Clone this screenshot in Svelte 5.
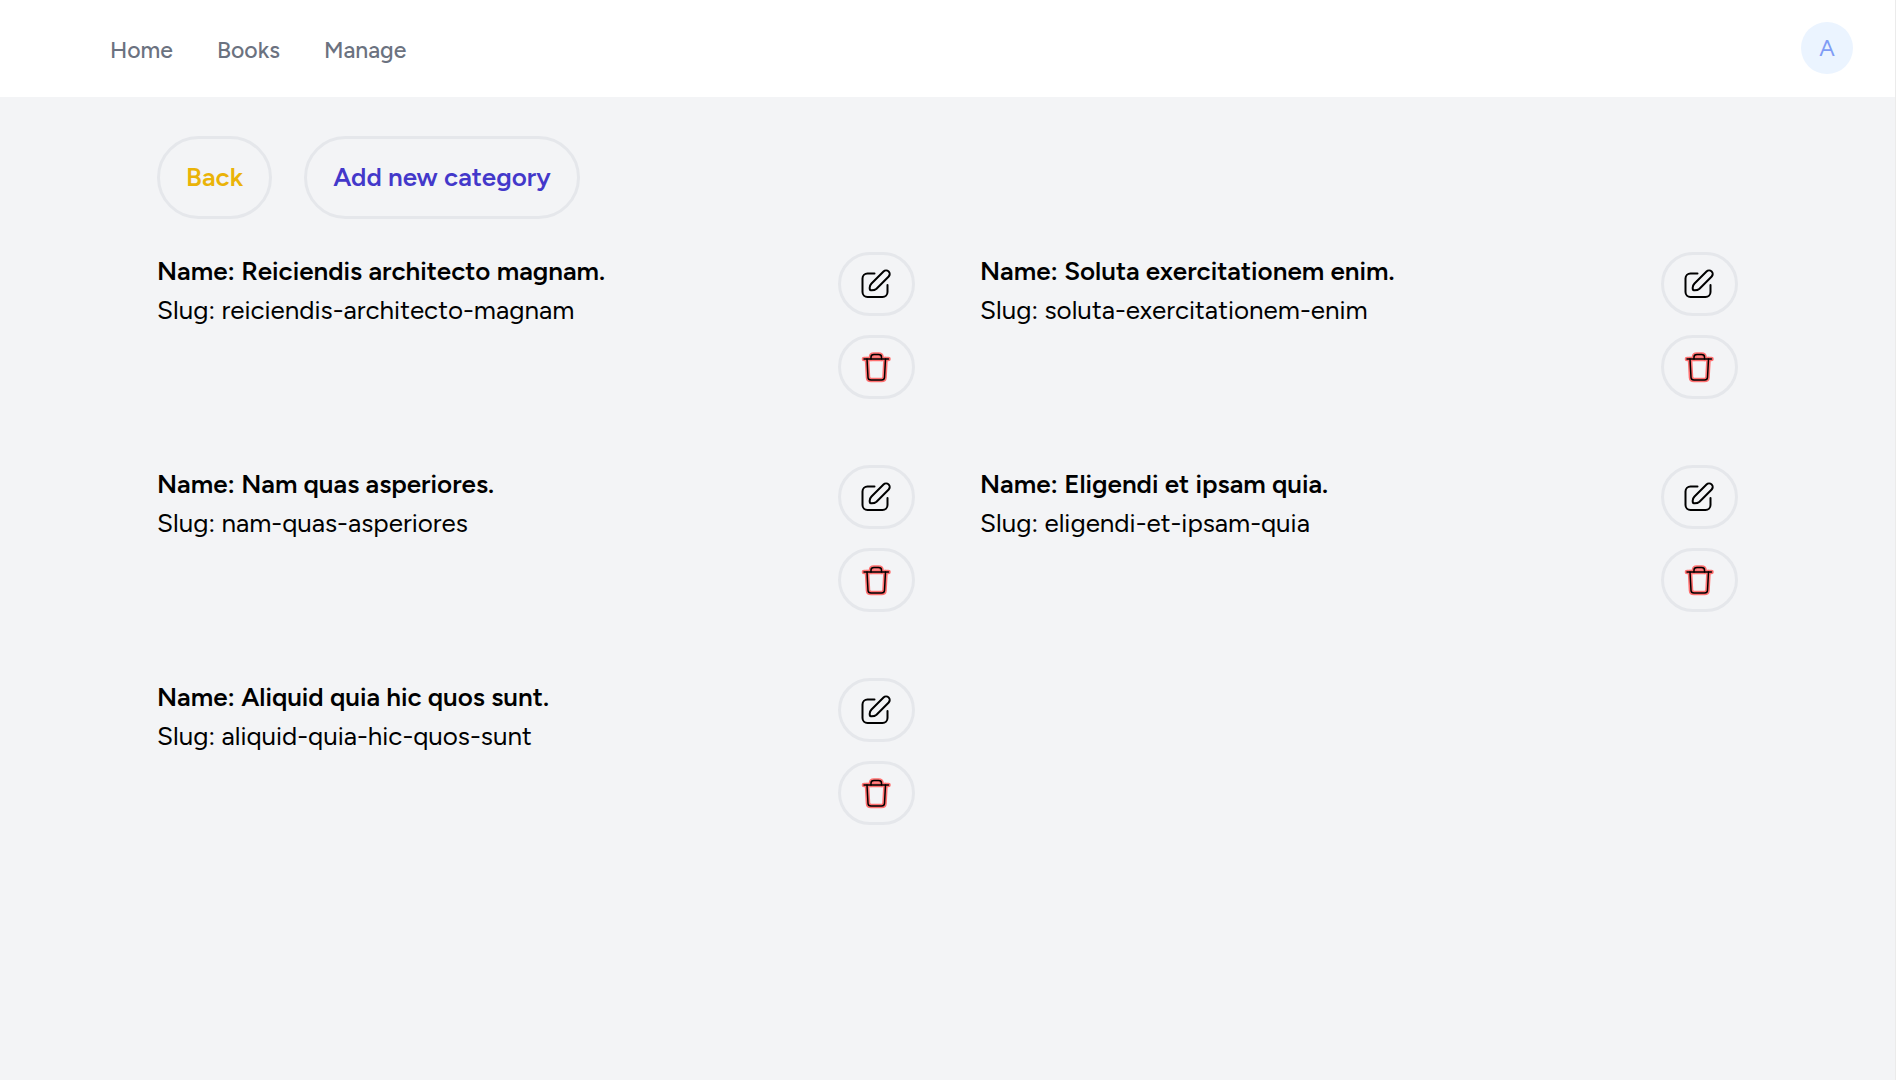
<script>
  const links = ['Home', 'Books', 'Manage'];
  const categories = [
    { name: 'Reiciendis architecto magnam.', slug: 'reiciendis-architecto-magnam' },
    { name: 'Soluta exercitationem enim.', slug: 'soluta-exercitationem-enim' },
    { name: 'Nam quas asperiores.', slug: 'nam-quas-asperiores' },
    { name: 'Eligendi et ipsam quia.', slug: 'eligendi-et-ipsam-quia' },
    { name: 'Aliquid quia hic quos sunt.', slug: 'aliquid-quia-hic-quos-sunt' },
  ];
</script>

<div class="page">
  <header>
    <nav>
      {#each links as link}
        <a href="#{link.toLowerCase()}">{link}</a>
      {/each}
    </nav>
    <button class="avatar" type="button" aria-label="Account menu">A</button>
  </header>

  <main>
    <div class="actions">
      <a class="pill back" href="#back">Back</a>
      <a class="pill add" href="#new">Add new category</a>
    </div>

    <div class="grid">
      {#each categories as category}
        <article>
          <div class="info">
            <h2>Name: {category.name}</h2>
            <p>Slug: {category.slug}</p>
          </div>
          <div class="tools">
            <button type="button" aria-label="Edit {category.name}">
              <svg viewBox="0 0 32 32" fill="none" stroke="#000" stroke-width="2" stroke-linecap="round" stroke-linejoin="round">
                <path d="M14.500 5.500H7.500A5 5 0 0 0 2.500 10.500V24A5 5 0 0 0 7.500 29H22.500A5 5 0 0 0 27.500 24V17" />
                <path d="M23.500 3.500A3.400 3.400 0 0 1 28.700 8.500L16.500 20.700Q14.500 22.500 11 22.300Q9.500 22 9.700 19.500Q10 17 11.500 15.500Z" />
              </svg>
            </button>
            <button type="button" aria-label="Delete {category.name}">
              <svg viewBox="0 0 32 32" fill="none" stroke-linecap="round" stroke-linejoin="round">
                {#each ['halo', 'line'] as layer}
                  <g class={layer}>
                    <path d="M4 8H28.500" />
                    <path d="M11 8V6Q11 3.500 14 3.500H18.500Q21.500 3.500 21.500 6V8" />
                    <path d="M7 8L8 26.500Q8.200 29 11 29H21.500Q24.300 29 24.500 26.500L25.500 8" />
                  </g>
                {/each}
              </svg>
            </button>
          </div>
        </article>
      {/each}
    </div>
  </main>
</div>

<style>
  :global(body) {
    margin: 0;
    background: #f3f4f6;
  }
  .page {
    min-height: 100vh;
    box-sizing: border-box;
    border-right: 1px solid #ebebeb;
    font-family: Figtree, Lato, sans-serif;
    font-size: 26px;
    font-weight: 400;
    line-height: 39px;
    color: #000;
  }
  header {
    display: flex;
    align-items: center;
    justify-content: space-between;
    padding: 22px 42px 23px 110px;
    background: #fff;
  }
  nav {
    display: flex;
    gap: 44px;
    padding-top: 4px;
  }
  nav a {
    color: #6b7280;
    font-size: 23px;
    font-weight: 500;
    text-decoration: none;
  }
  .avatar {
    width: 52px;
    height: 52px;
    padding: 0;
    border: 0;
    border-radius: 50%;
    background: #ebf4ff;
    color: #7f9cf5;
    font-family: inherit;
    font-size: 23px;
  }
  main {
    padding: 39px 157px;
  }
  .actions {
    display: flex;
    gap: 32px;
    margin-bottom: 33px;
  }
  .pill {
    padding: 19px 26px;
    border: 3px solid #e5e7eb;
    border-radius: 42px;
    font-weight: 600;
    text-decoration: none;
  }
  .back {
    color: #eab308;
  }
  .add {
    color: #4338ca;
  }
  .grid {
    display: grid;
    grid-template-columns: 1fr 1fr;
    gap: 66px 65px;
  }
  article {
    display: flex;
    justify-content: space-between;
  }
  h2,
  p {
    margin: 0;
    font-size: 26px;
  }
  h2 {
    font-weight: 600;
  }
  .tools {
    display: flex;
    flex-direction: column;
    gap: 19px;
  }
  .tools button {
    display: flex;
    align-items: center;
    box-sizing: border-box;
    width: 77px;
    height: 64px;
    padding: 0 19px;
    border: 3px solid #e5e7eb;
    border-radius: 32px;
    background: none;
  }
  svg {
    flex: none;
    width: 32px;
    height: 32px;
  }
  .halo {
    stroke: #ff7070;
    stroke-width: 4.6;
  }
  .line {
    stroke: #000;
    stroke-width: 1.5;
  }
</style>
